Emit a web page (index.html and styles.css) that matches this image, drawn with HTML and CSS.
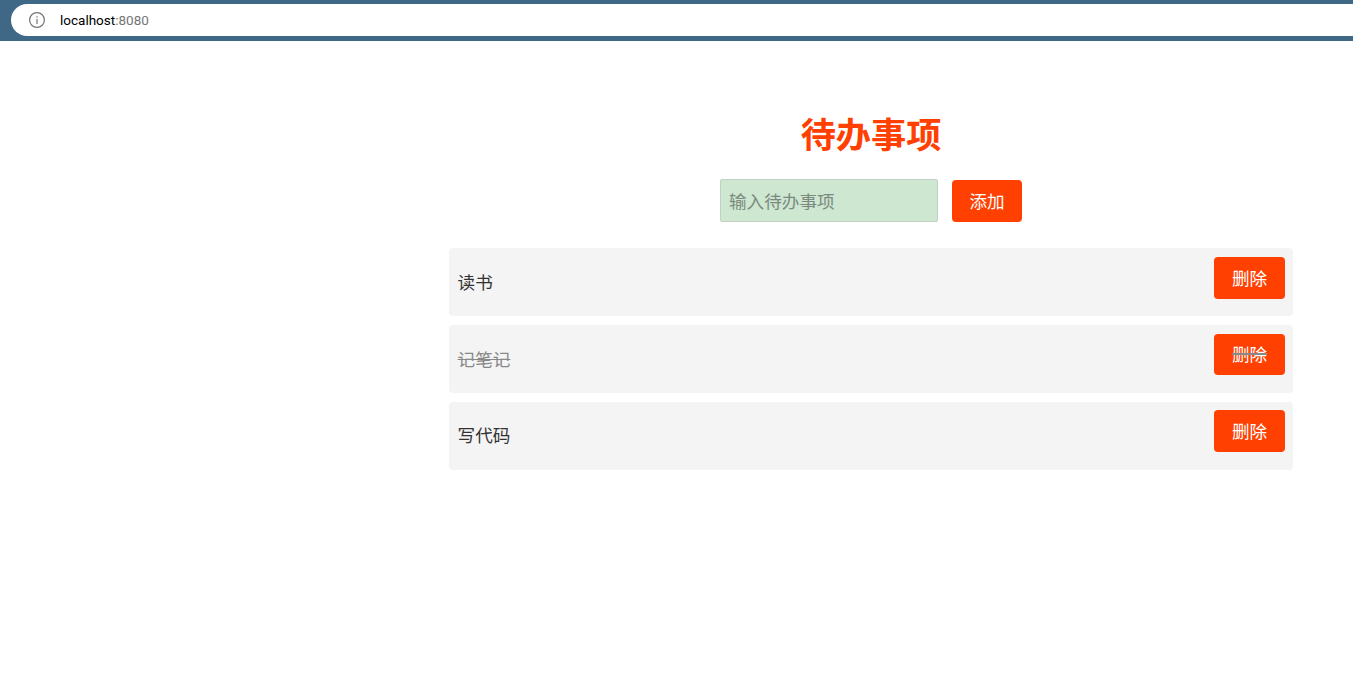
FILE: index.html
```html
<!DOCTYPE html>
<html lang="zh-CN">
<head>
    <meta charset="UTF-8">
    <title>待办事项</title>
    <link rel="stylesheet" href="styles.css">
</head>
<body>
    <div class="browser-bar">
        <div class="address">
            <svg class="info-icon" width="18" height="18" viewBox="0 0 18 18">
                <circle cx="9" cy="9" r="7.4" fill="none" stroke="#757575" stroke-width="1.2"/>
                <rect x="8.4" y="8" width="1.2" height="5" fill="#757575"/>
                <rect x="8.4" y="5.2" width="1.2" height="1.4" fill="#757575"/>
            </svg>
            <span class="host">localhost</span><span class="port">:8080</span>
        </div>
    </div>

    <div class="app">
        <h1 class="title">待办事项</h1>

        <div class="add-form">
            <input class="add-input" type="text" placeholder="输入待办事项">
            <button class="btn add-btn">添加</button>
        </div>

        <ul class="todo-list">
            <li class="todo">
                <span class="todo-text">读书</span>
                <button class="btn"><span>删除</span></button>
            </li>
            <li class="todo done">
                <span class="todo-text">记笔记</span>
                <button class="btn"><span>删除</span></button>
            </li>
            <li class="todo">
                <span class="todo-text">写代码</span>
                <button class="btn"><span>删除</span></button>
            </li>
        </ul>
    </div>
</body>
</html>
```

FILE: styles.css
```css
* {
    margin: 0;
    padding: 0;
    box-sizing: border-box;
}

html, body {
    height: 100%;
    overflow: hidden;
}

body {
    font-family: "Noto Sans CJK SC", "Liberation Sans", sans-serif;
    background: #fff;
    color: #333;
}

.browser-bar {
    background: #3f6786;
    height: 41px;
    padding: 4px 0 4px 11px;
}

.address {
    background: #fff;
    height: 32px;
    border-radius: 16px 0 0 16px;
    display: flex;
    align-items: center;
    padding-left: 17px;
    font-family: "Roboto", "Liberation Sans", sans-serif;
    font-size: 13.5px;
}

.info-icon {
    margin-right: 14px;
}

.host {
    color: #000;
}

.port {
    color: #757575;
}

.app {
    width: 844px;
    margin-left: 449px;
    padding-top: 64px;
}

.title {
    color: #ff4000;
    font-size: 35.2px;
    line-height: 56px;
    text-align: center;
    font-weight: 700;
}

.add-form {
    display: flex;
    justify-content: center;
    align-items: flex-start;
    gap: 14px;
    margin-top: 18px;
}

.add-input {
    width: 218px;
    height: 43px;
    padding: 0 8px;
    background: #cde7d1;
    border: 1px solid #c4cfc6;
    border-radius: 2px;
    font-family: inherit;
    font-size: 17.6px;
}

.add-input::placeholder {
    color: #7b8a7e;
}

.btn {
    width: 71px;
    height: 41.6px;
    background: #ff4000;
    color: #fff;
    border: none;
    border-radius: 4px;
    font-family: inherit;
    font-size: 17.6px;
    line-height: 38px;
}

.add-btn {
    width: 70px;
    height: 42px;
    margin-top: 1px;
}

.todo-list {
    list-style: none;
    margin-top: 26.4px;
    display: grid;
    gap: 8.6px;
}

.todo {
    background: #f4f4f4;
    border-radius: 4px;
    height: 68px;
    padding: 8.6px 8px 0 8.6px;
    display: flex;
    justify-content: space-between;
    align-items: flex-start;
}

.todo-text {
    font-size: 17.6px;
    line-height: 50px;
}

.done .todo-text {
    color: #888;
    text-decoration: line-through;
    text-decoration-thickness: 1px;
}

.done .btn span {
    text-decoration: line-through;
    text-decoration-color: #888;
    text-decoration-thickness: 1.5px;
}
```
